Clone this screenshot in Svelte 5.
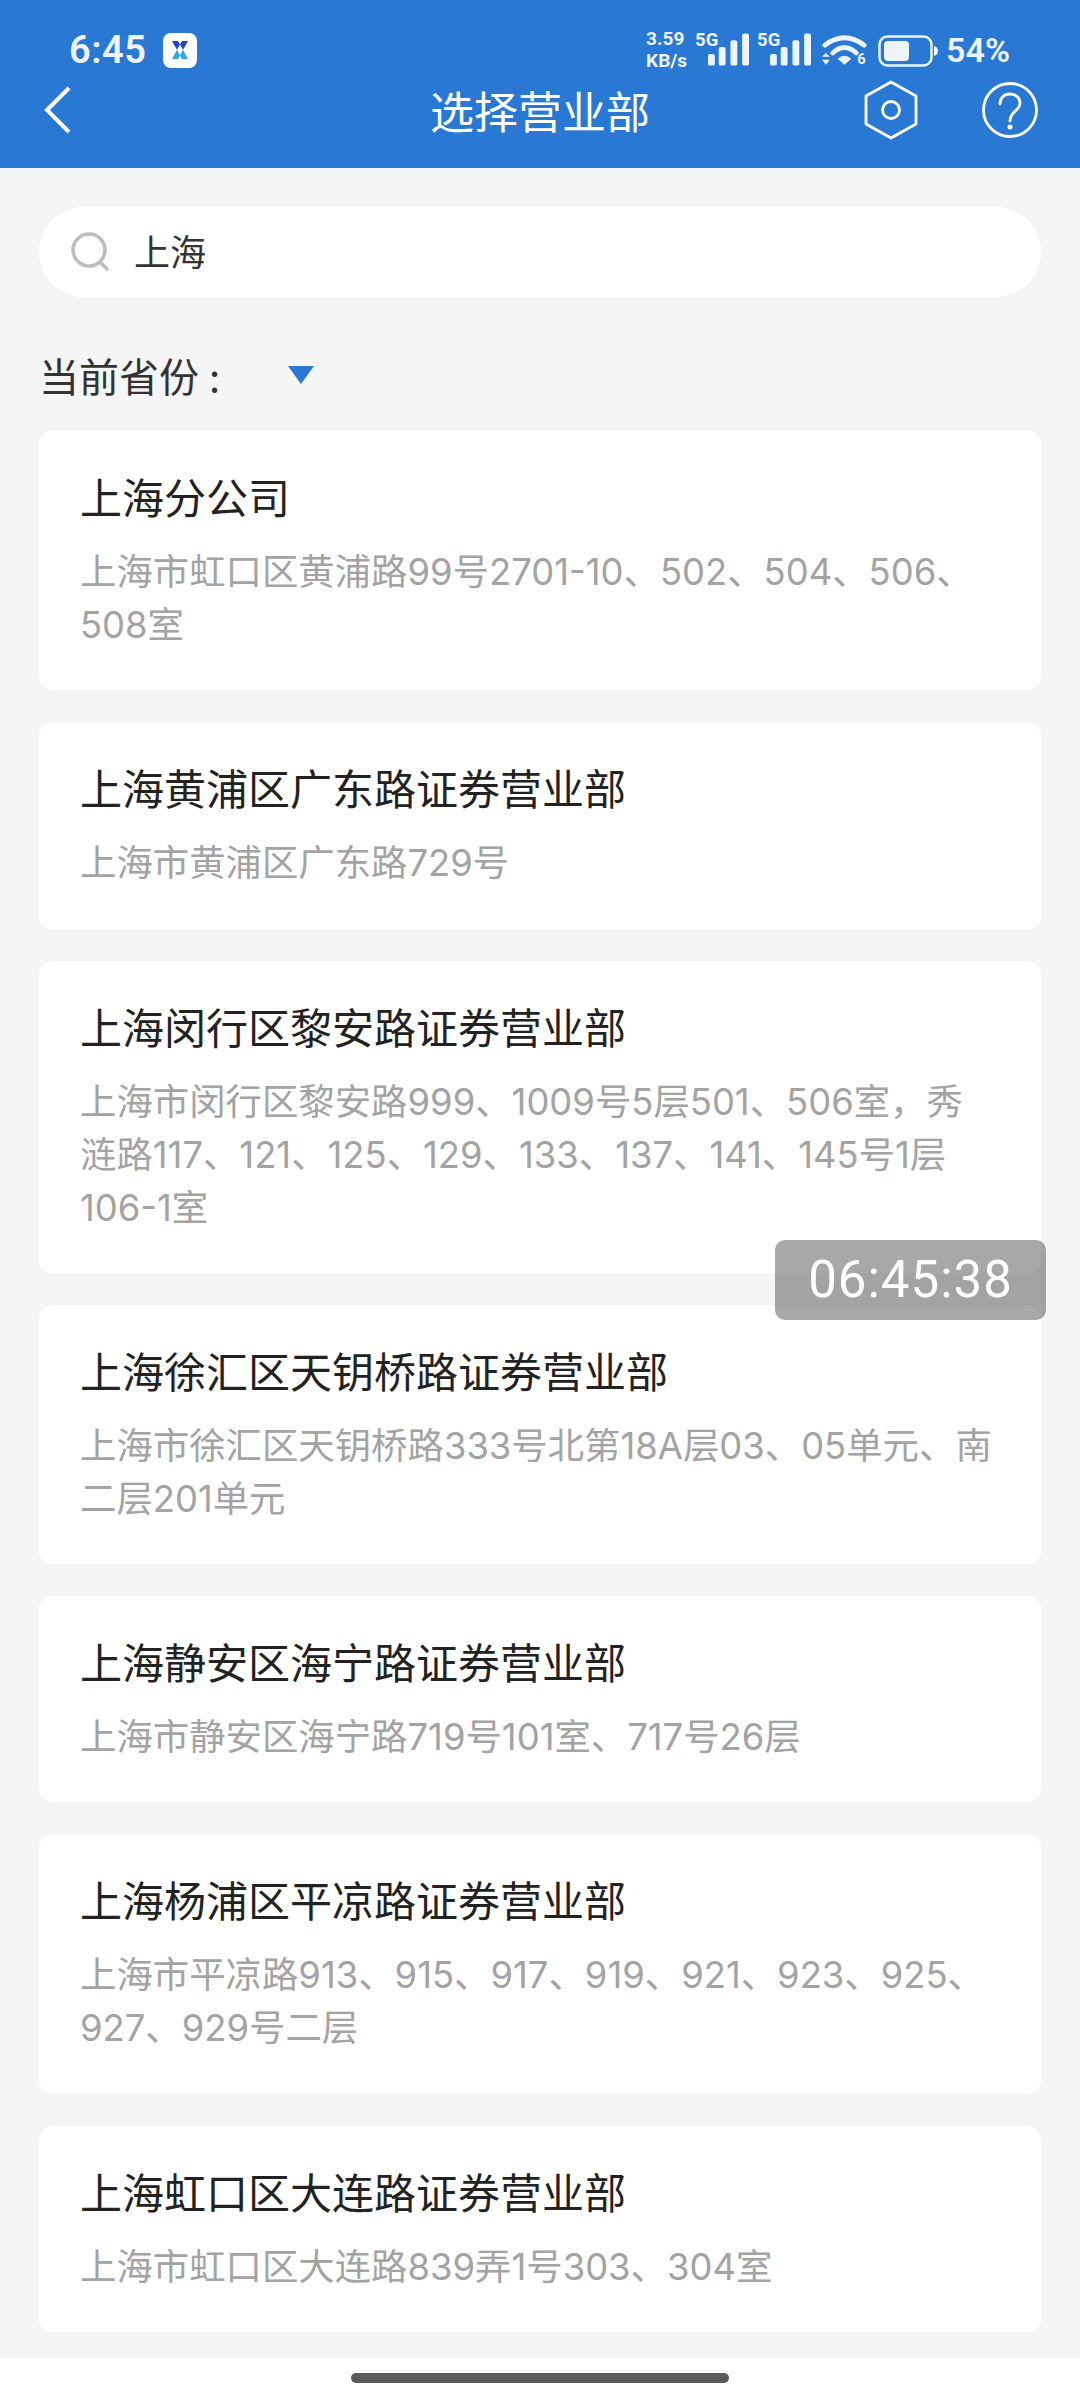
<script lang="ts">
  const branches = [
    { name: '上海分公司', addr: '上海市虹口区黄浦路99号2701-10、502、504、506、508室' },
    { name: '上海黄浦区广东路证券营业部', addr: '上海市黄浦区广东路729号' },
    { name: '上海闵行区黎安路证券营业部', addr: '上海市闵行区黎安路999、1009号5层501、506室\uFF0C秀涟路117、121、125、129、133、137、141、145号1层106-1室' },
    { name: '上海徐汇区天钥桥路证券营业部', addr: '上海市徐汇区天钥桥路333号北第18A层03、05单元、南二层201单元' },
    { name: '上海静安区海宁路证券营业部', addr: '上海市静安区海宁路719号101室、717号26层' },
    { name: '上海杨浦区平凉路证券营业部', addr: '上海市平凉路913、915、917、919、921、923、925、927、929号二层' },
    { name: '上海虹口区大连路证券营业部', addr: '上海市虹口区大连路839弄1号303、304室' }
  ]
</script>

<div class="page">
  <header class="top">
    <div class="status">
      <div class="status-left">
        <span class="clock">6:45</span>
        <span class="app-badge">
          <svg viewBox="0 0 24 24" width="24" height="24" fill="none" stroke-width="5">
            <defs>
              <linearGradient id="xfade" x1="0" y1="0" x2="0" y2="1">
                <stop offset="0.3" stop-color="#2147c4" />
                <stop offset="0.7" stop-color="#2ba4f2" />
              </linearGradient>
            </defs>
            <path d="M4 3h6l10 18h-6z M20 3h-6L4 21h6z" fill="url(#xfade)" stroke="none" />
          </svg>
        </span>
      </div>
      <div class="status-right">
        <span class="speed">3.59<br />KB/s</span>
        <span class="net">
          <span class="tag">5G</span>
          <svg viewBox="0 0 42 34" width="41" height="34" fill="#eef4fc">
            <rect x="0" y="21" width="7" height="12" rx="2" /><rect x="11" y="14" width="7" height="19" rx="2" /><rect x="23" y="7" width="7" height="26" rx="2" /><rect x="35" y="0" width="7" height="33" rx="2" />
          </svg>
        </span>
        <span class="net second">
          <span class="tag">5G</span>
          <svg viewBox="0 0 42 34" width="41" height="34" fill="#eef4fc">
            <rect x="0" y="21" width="7" height="12" rx="2" /><rect x="11" y="14" width="7" height="19" rx="2" /><rect x="23" y="7" width="7" height="26" rx="2" /><rect x="35" y="0" width="7" height="33" rx="2" />
          </svg>
        </span>
        <svg class="wifi" viewBox="0 0 46 34" width="45" height="34">
          <path d="M3 12 Q23 -3 43 12" stroke="#eef4fc" stroke-width="5" fill="none" stroke-linecap="round" />
          <path d="M11 20 Q23 9 35 20" stroke="#eef4fc" stroke-width="5" fill="none" stroke-linecap="round" />
          <path d="M16 26 Q23 20 30 26 L23 32z" fill="#eef4fc" />
          <path d="M0 24l4-4 4 4zM0 27l4 5 4-5z" fill="#eef4fc" />
          <text x="36" y="31" class="wifi-six">6</text>
        </svg>
        <svg class="battery" viewBox="0 0 60 32" width="60" height="32">
          <rect x="1.5" y="1.5" width="52" height="29" rx="8" fill="none" stroke="#eef4fc" stroke-width="2.5" />
          <rect x="6" y="6" width="25" height="20" rx="4" fill="#eef4fc" />
          <path d="M56 11q4 1 4 5t-4 5z" fill="#eef4fc" />
        </svg>
        <span class="pct">54%</span>
      </div>
    </div>
    <div class="nav">
      <svg class="back" viewBox="0 0 28 48" width="28" height="48">
        <path d="M25 2 L3 24 L25 46" fill="none" stroke="#fff" stroke-width="4" />
      </svg>
      <h1>选择营业部</h1>
      <div class="nav-actions">
        <svg viewBox="0 0 54 60" width="54" height="60" fill="none" stroke="#fff" stroke-width="2.8">
          <path d="M27 2 L52 16 V44 L27 58 L2 44 V16 Z" stroke-linejoin="round" />
          <circle cx="27" cy="30" r="8.5" />
        </svg>
        <svg viewBox="0 0 56 56" width="56" height="56" fill="none" stroke="#fff" stroke-width="2.8">
          <circle cx="28" cy="28" r="26.5" />
          <path d="M18 22c0-6 4-10 10-10s10 4 10 9c0 8-10 8-10 18" stroke-linecap="round" />
          <circle cx="28" cy="45" r="2.5" fill="#fff" stroke="none" />
        </svg>
      </div>
    </div>
  </header>

  <main class="content">
    <div class="search">
      <svg viewBox="0 0 40 40" width="40" height="40" fill="none" stroke="#bdbdbd" stroke-width="3.6">
        <circle cx="18" cy="18" r="16" />
        <path d="M29 30 L36 37" stroke-linecap="round" />
      </svg>
      <span>上海</span>
    </div>

    <div class="province">
      <span>当前省份 :</span>
      <i class="caret"></i>
    </div>

    <div class="list">
      {#each branches as b}
        <section class="card">
          <h2>{b.name}</h2>
          <p>{b.addr}</p>
        </section>
      {/each}
    </div>
  </main>

  <div class="home-bar"><i></i></div>
  <div class="timer">06:45:38</div>
</div>

<style>
  :global(body) {
    margin: 0;
    background: #f5f5f5;
  }

  .page {
    position: relative;
    width: 1080px;
    height: 2400px;
    overflow: hidden;
    background: #f5f5f5;
    font-family: "Noto Sans CJK SC", "Noto Sans", sans-serif;
  }

  .top {
    height: 168px;
    box-sizing: border-box;
    background: #2878d4;
    color: #fff;
    padding-top: 30px;
  }

  .status {
    display: flex;
    justify-content: space-between;
    align-items: center;
    height: 40px;
    padding: 0 70px 0 69px;
    color: #eef4fc;
  }

  .status-left {
    display: flex;
    align-items: center;
    gap: 17px;
  }

  .clock {
    font-family: Roboto, sans-serif;
    font-size: 38px;
    font-weight: 600;
    letter-spacing: 0.5px;
  }

  .app-badge {
    display: flex;
    align-items: center;
    justify-content: center;
    width: 34px;
    height: 35px;
    border-radius: 8px;
    background: #fff;
  }

  .status-right {
    display: flex;
    align-items: flex-end;
    height: 34px;
    font-family: Roboto, sans-serif;
    font-weight: 700;
  }

  .speed {
    width: 49px;
    margin-bottom: -5px;
    font-size: 19px;
    line-height: 22px;
    white-space: nowrap;
  }

  .net {
    position: relative;
    display: flex;
    align-items: flex-end;
    justify-content: flex-end;
    width: 54px;
  }

  .net.second {
    margin-left: 8px;
  }

  .tag {
    position: absolute;
    left: 0;
    top: -2px;
    font-size: 18.5px;
    line-height: 18px;
  }

  .wifi {
    margin-left: 11px;
  }

  .wifi-six {
    font-family: Roboto, sans-serif;
    font-size: 15px;
    font-weight: 700;
    fill: #eef4fc;
  }

  .battery {
    margin-left: 11px;
  }

  .pct {
    margin-left: 8px;
    font-size: 34px;
    line-height: 34px;
    font-weight: 600;
  }

  .nav {
    position: relative;
    display: flex;
    align-items: center;
    justify-content: center;
    height: 64px;
    margin-top: 8px;
  }

  .back {
    position: absolute;
    left: 44px;
    top: 8px;
  }

  .nav h1 {
    margin: 0;
    font-size: 44px;
    font-weight: 400;
    line-height: 64px;
  }

  .nav-actions {
    position: absolute;
    right: 42px;
    top: 2px;
    display: flex;
    align-items: center;
    gap: 64px;
  }

  .content {
    padding: 39px 39px 0;
  }

  .search {
    display: flex;
    align-items: center;
    gap: 23px;
    height: 90px;
    padding-left: 32px;
    border-radius: 45px;
    background: #fff;
    color: #333;
    font-size: 36px;
  }

  .search span {
    margin-top: -5px;
  }

  .province {
    display: flex;
    align-items: center;
    height: 62px;
    margin-top: 47px;
    color: #333;
    font-size: 40px;
    word-spacing: 1px;
  }

  .caret {
    width: 0;
    height: 0;
    margin-left: 68px;
    border-left: 13px solid transparent;
    border-right: 13px solid transparent;
    border-top: 18px solid #2878d4;
  }

  .list {
    display: flex;
    flex-direction: column;
    gap: 32px;
    margin-top: 25px;
  }

  .card {
    box-sizing: border-box;
    padding: 35px 46px 38.3px 41px;
    border-radius: 14px;
    background: #fff;
  }

  .card h2 {
    margin: 0;
    color: #222;
    font-size: 42px;
    font-weight: 400;
    line-height: 60px;
  }

  .card p {
    margin: 20px 0 0;
    color: #a3a3a3;
    font-family: Inter, "Noto Sans CJK SC", sans-serif;
    font-size: 36.4px;
    line-height: 53px;
  }

  .home-bar {
    position: absolute;
    left: 0;
    right: 0;
    bottom: 0;
    height: 42px;
    background: #fff;
  }

  .home-bar i {
    position: absolute;
    left: 351px;
    top: 15px;
    width: 378px;
    height: 10px;
    border-radius: 5px;
    background: #5a5a5a;
  }

  .timer {
    position: absolute;
    left: 775px;
    top: 1240px;
    width: 271px;
    height: 80px;
    border-radius: 10px;
    background: rgba(81, 81, 81, 0.5);
    color: #fff;
    font-family: Roboto, sans-serif;
    font-size: 51px;
    font-weight: 400;
    line-height: 80px;
    text-align: center;
    letter-spacing: 1px;
  }
</style>
